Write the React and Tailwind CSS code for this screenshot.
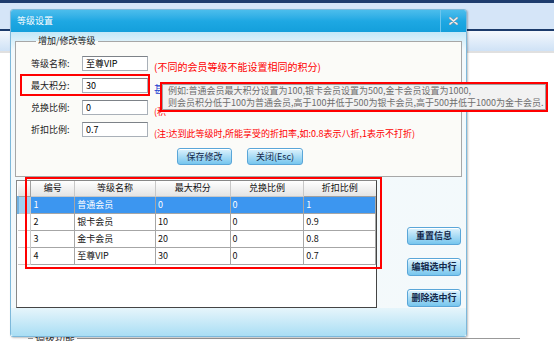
import React from 'react'

// level settings dialog over the member admin page

const rows = [
  { id: '1', name: '普通会员', max: '0', rate: '0', discount: '1' },
  { id: '2', name: '银卡会员', max: '10', rate: '0', discount: '0.9' },
  { id: '3', name: '金卡会员', max: '20', rate: '0', discount: '0.8' },
  { id: '4', name: '至尊VIP', max: '30', rate: '0', discount: '0.7' },
]

const BlueButton = ({ children, className = '' }) => (
  <button
    className={`h-[17px] rounded-[3px] border border-[#5aa6d8] bg-gradient-to-b from-[#def3fd] via-[#aadcf5] to-[#76c6ee] text-[9px] leading-[12px] text-[#13284a] shadow-[inset_0_1px_0_#ffffff] ${className}`}
  >
    {children}
  </button>
)

const FormRow = ({ label, value, children }) => (
  <div className="flex items-center h-[15px]">
    <span className="w-[51px] text-[9px] leading-[12px] text-[#222]">{label}</span>
    <input
      readOnly
      value={value}
      className="w-[66px] h-[15px] border border-[#a9b0b8] border-t-[#7d8288] bg-white px-[3px] text-[9px] leading-[12px] text-black outline-none"
    />
    <div className="ml-[6px] whitespace-nowrap">{children}</div>
  </div>
)

export default function App() {
  return (
    <div className="relative w-[554px] h-[341px] overflow-hidden bg-white font-['Noto_Sans_CJK_SC','Noto_Sans',sans-serif]">
      {/* page behind the dialog */}
      <div className="h-[3px] bg-[#1e3c6e]" />
      <div className="h-[26px] bg-[#d5e5f8]" />
      <div className="h-[2px] bg-[#1b3a6b]" />
      <div className="h-[20px] bg-gradient-to-b from-[#f4f8fd] to-[#cfe2f6]" />
      <div className="h-[2px] bg-[#e0e0e0]" />
      <div className="h-[281px]" />
      <div className="flex items-center ml-[28px] mr-[34px] h-[8px] overflow-hidden">
        <div className="w-[5px] h-px bg-[#999]" />
        <span className="px-[2px] text-[10px] leading-[10px] text-[#333]">调拨功能</span>
        <div className="flex-1 h-px bg-[#999]" />
      </div>

      {/* dialog */}
      <div className="absolute left-[10px] top-[9px] w-[457px] h-[328px] flex flex-col rounded-[3px] border border-[#7db8da] bg-[#f2f9fc] shadow-[1px_1px_2px_rgba(0,0,0,0.25)]">
        <div className="h-[22px] flex items-center bg-gradient-to-b from-[#4bbdec] via-[#1ea8e3] to-[#139fdb] rounded-t-[2px]">
          <span className="ml-[6px] text-[9px] leading-[12px] text-white">等级设置</span>
          <div className="ml-auto w-[26px] h-full flex items-center justify-center border-l border-[#6cc6ee]">
            <svg width="9" height="8" viewBox="0 0 9 8">
              <path d="M1 1L8 7M8 1L1 7" stroke="#8a9aa6" strokeWidth="2.6" strokeLinecap="round" />
              <path d="M1 1L8 7M8 1L1 7" stroke="#eef3f6" strokeWidth="1.4" strokeLinecap="round" />
            </svg>
          </div>
        </div>

        <div className="flex-1 flex flex-col bg-gradient-to-b from-[#c2e8f8] via-[#f2f9fc] via-[6%] to-[#f4f9fb]">
          <fieldset className="mt-[3px] mx-[4px] h-[142px] border border-[#a7a7a7] bg-[#fbfbf8] pl-[15px] pt-[9px]">
            <legend className="ml-[5px] px-[2px] text-[9px] leading-[12px] text-[#222]">增加/修改等级</legend>
            <div className="flex flex-col gap-[7px]">
              <FormRow label="等级名称:" value="至尊VIP">
                <span className="text-[10px] leading-[12px] text-[#ff0000]">(不同的会员等级不能设置相同的积分)</span>
              </FormRow>
              <FormRow label="最大积分:" value="30">
                <span className="text-[10px] leading-[12px] text-[#1c3fd0]">甚</span>
              </FormRow>
              <FormRow label="兑换比例:" value="0">
                <span className="text-[9px] leading-[12px] text-[#ff0000]">(积</span>
              </FormRow>
              <FormRow label="折扣比例:" value="0.7">
                <span className="text-[9px] leading-[12px] text-[#ff0000]">(注:达到此等级时,所能享受的折扣率,如:0.8表示八折,1表示不打折)</span>
              </FormRow>
            </div>
            <div className="mt-[11px] flex justify-center gap-[15px] pr-[12px]">
              <BlueButton className="w-[55px]">保存修改</BlueButton>
              <BlueButton className="w-[56px]">关闭(Esc)</BlueButton>
            </div>
          </fieldset>

          <div className="mt-[3px] ml-[5px] flex h-[128px]">
            <div className="w-[361px] h-full border border-[#444] border-t-[#888] border-l-[#888] bg-white">
              <table className="table-fixed border-collapse text-[9px] leading-[12px]">
                <colgroup>
                  <col className="w-[13px]" />
                  <col className="w-[44px]" />
                  <col className="w-[81px]" />
                  <col className="w-[75px]" />
                  <col className="w-[74px]" />
                  <col className="w-[72px]" />
                </colgroup>
                <thead>
                  <tr className="h-[15px] bg-gradient-to-b from-white to-[#e4e4e4] text-[#111]">
                    <th className="border-b border-r border-[#a0a0a0] font-normal" />
                    <th className="border-b border-r border-[#c8c8c8] font-normal text-center">编号</th>
                    <th className="border-b border-r border-[#c8c8c8] font-normal text-center">等级名称</th>
                    <th className="border-b border-r border-[#c8c8c8] font-normal text-center">最大积分</th>
                    <th className="border-b border-r border-[#c8c8c8] font-normal text-center">兑换比例</th>
                    <th className="border-b border-[#a0a0a0] font-normal text-center">折扣比例</th>
                  </tr>
                </thead>
                <tbody>
                  {rows.map((r, i) => {
                    const sel = i === 0
                    const cell = `border border-[#a6a6a6] px-[2px] text-left font-normal ${sel ? 'bg-[#3c96f0] text-white' : 'text-[#111]'}`
                    return (
                      <tr key={r.id} className="h-[17px]">
                        <td className={`border-r border-b border-[#c9c9c9] ${sel ? 'bg-[#9fd0f2] border-l-2 border-l-[#6fb0e0]' : 'bg-white'}`} />
                        <td className={cell}>{r.id}</td>
                        <td className={cell}>{r.name}</td>
                        <td className={cell}>{r.max}</td>
                        <td className={cell}>{r.rate}</td>
                        <td className={cell}>{r.discount}</td>
                      </tr>
                    )
                  })}
                </tbody>
              </table>
            </div>
            <div className="ml-[30px] w-[54px] flex flex-col justify-end gap-[13px] pb-px">
              <BlueButton className="w-[54px] h-[18px] font-bold">重置信息</BlueButton>
              <BlueButton className="w-[54px] h-[18px] font-bold">编辑选中行</BlueButton>
              <BlueButton className="w-[54px] h-[18px] font-bold">删除选中行</BlueButton>
            </div>
          </div>

          <div className="flex-1 bg-gradient-to-b from-[#e6f5fb] to-[#a9def4] rounded-b-[2px]" />
        </div>
      </div>

      {/* annotation boxes */}
      <div className="absolute left-[20px] top-[74px] w-[130px] h-[22px] border-2 border-[#ff0000]" />
      <div className="absolute z-10 left-[160px] top-[82px] w-[388px] h-[30px] border-2 border-[#ff0000]">
        <div className="h-full border border-[#a0a0a0] bg-[#f2f2f2] px-[5px] text-[9px] leading-[12px] text-[#6e6e6e] whitespace-nowrap">
          <div>例如:普通会员最大积分设置为100,银卡会员设置为500,金卡会员设置为1000,</div>
          <div>则会员积分低于100为普通会员,高于100并低于500为银卡会员,高于500并低于1000为金卡会员.</div>
        </div>
      </div>
      <div className="absolute left-[25px] top-[177px] w-[357px] h-[92px] border-2 border-[#ff0000]" />
    </div>
  )
}
